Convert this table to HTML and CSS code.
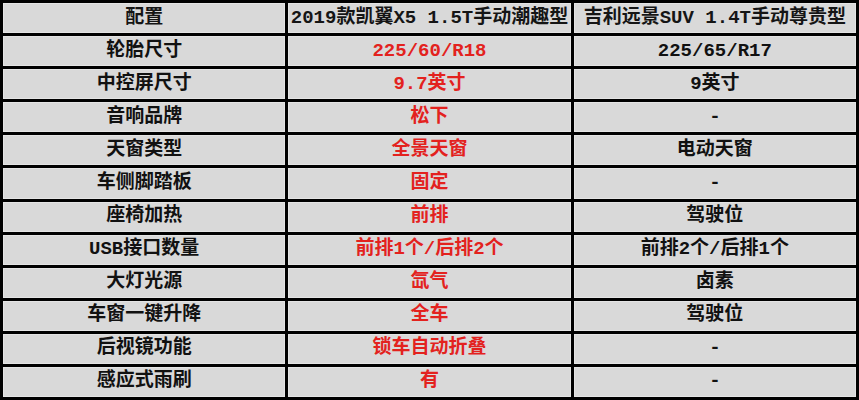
FILE: index.html
```html
<!DOCTYPE html>
<html lang="zh-CN">
<head>
<meta charset="utf-8">
<title>配置对比</title>
<link rel="stylesheet" href="styles.css">
</head>
<body>
<div class="table">
  <div class="cell head">配置</div>
  <div class="cell head">2019款凯翼X5 1.5T手动潮趣型</div>
  <div class="cell head">吉利远景SUV 1.4T手动尊贵型</div>

  <div class="cell label">轮胎尺寸</div>
  <div class="cell red">225/60/R18</div>
  <div class="cell val">225/65/R17</div>

  <div class="cell label">中控屏尺寸</div>
  <div class="cell red">9.7英寸</div>
  <div class="cell val">9英寸</div>

  <div class="cell label">音响品牌</div>
  <div class="cell red">松下</div>
  <div class="cell val">-</div>

  <div class="cell label">天窗类型</div>
  <div class="cell red">全景天窗</div>
  <div class="cell val">电动天窗</div>

  <div class="cell label">车侧脚踏板</div>
  <div class="cell red">固定</div>
  <div class="cell val">-</div>

  <div class="cell label">座椅加热</div>
  <div class="cell red">前排</div>
  <div class="cell val">驾驶位</div>

  <div class="cell label">USB接口数量</div>
  <div class="cell red">前排1个/后排2个</div>
  <div class="cell val">前排2个/后排1个</div>

  <div class="cell label">大灯光源</div>
  <div class="cell red">氙气</div>
  <div class="cell val">卤素</div>

  <div class="cell label">车窗一键升降</div>
  <div class="cell red">全车</div>
  <div class="cell val">驾驶位</div>

  <div class="cell label">后视镜功能</div>
  <div class="cell red">锁车自动折叠</div>
  <div class="cell val">-</div>

  <div class="cell label">感应式雨刷</div>
  <div class="cell red">有</div>
  <div class="cell val">-</div>
</div>
</body>
</html>
```

FILE: styles.css
```css
html, body {
  margin: 0;
  padding: 0;
  background: #ffffff;
}

.table {
  box-sizing: border-box;
  width: 859px;
  height: 400px;
  display: grid;
  grid-template-columns: repeat(3, 1fr);
  grid-template-rows: repeat(12, 1fr);
  gap: 3px;
  padding: 3px;
  background: #000000;
}

.cell {
  background: #d9d9d9;
  box-shadow: inset 0 0 0 1px #e4e4e4;
  display: flex;
  align-items: center;
  justify-content: center;
  font-family: "Liberation Mono", "Noto Sans CJK SC", monospace;
  font-size: 19px;
  color: #111111;
  white-space: nowrap;
  line-height: 1;
  font-weight: 700;
}

.head {
  color: #151515;
}

.label {
  color: #111111;
}

.red {
  color: #e3221e;
}

.val {
  color: #111111;
}
```
